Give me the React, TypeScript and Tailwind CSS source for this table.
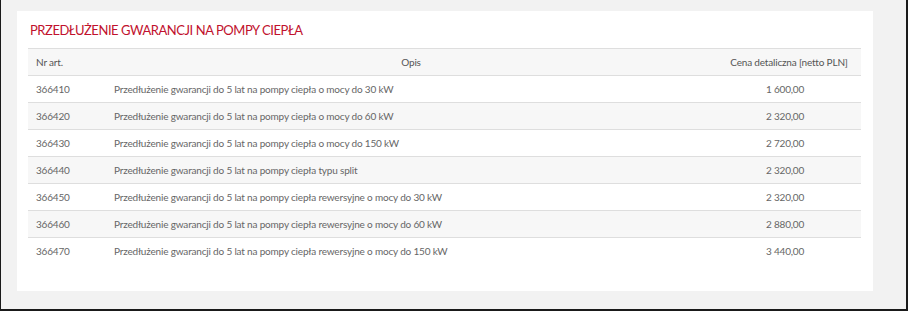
import React from 'react';

const rows = [
    { nr: '366410', opis: 'Przedłużenie gwarancji do 5 lat na pompy ciepła o mocy do 30 kW', cena: '1 600,00' },
    { nr: '366420', opis: 'Przedłużenie gwarancji do 5 lat na pompy ciepła o mocy do 60 kW', cena: '2 320,00' },
    { nr: '366430', opis: 'Przedłużenie gwarancji do 5 lat na pompy ciepła o mocy do 150 kW', cena: '2 720,00' },
    { nr: '366440', opis: 'Przedłużenie gwarancji do 5 lat na pompy ciepła typu split', cena: '2 320,00' },
    { nr: '366450', opis: 'Przedłużenie gwarancji do 5 lat na pompy ciepła rewersyjne o mocy do 30 kW', cena: '2 320,00' },
    { nr: '366460', opis: 'Przedłużenie gwarancji do 5 lat na pompy ciepła rewersyjne o mocy do 60 kW', cena: '2 880,00' },
    { nr: '366470', opis: 'Przedłużenie gwarancji do 5 lat na pompy ciepła rewersyjne o mocy do 150 kW', cena: '3 440,00' },
];

export default function App() {
    return (
        <div className="h-[311px] w-[908px] bg-[#f2f2f2] border-l border-r-2 border-b-2 border-[#1a1a1a] pl-[16px] pt-[11px] font-['Lato',sans-serif]">
            <div className="w-[856px] h-[280px] bg-white pl-[11px] pr-[12px] pt-[10px]">
                <h1 className="text-[13px] leading-[18px] text-[#c1112d] pl-[2px] uppercase tracking-[-0.45px]">
                    Przedłużenie gwarancji na pompy ciepła
                </h1>
                <table className="mt-[9px] w-[833px] border-collapse text-[10px] tracking-[-0.18px] text-[#666666]">
                    <thead>
                        <tr className="h-[27px] bg-[#f7f7f7] border-t border-b border-[#dedede] text-[#555555]">
                            <th className="w-[77px] text-left font-normal pl-[8px]">Nr art.</th>
                            <th className="font-normal text-center">Opis</th>
                            <th className="w-[144px] font-normal text-center">Cena detaliczna [netto PLN]</th>
                        </tr>
                    </thead>
                    <tbody>
                        {rows.map((r, i) => (
                            <tr
                                key={r.nr}
                                className={`h-[27px] ${i % 2 === 1 ? 'bg-[#f7f7f7]' : 'bg-white'} ${i < rows.length - 1 ? 'border-b border-[#dedede]' : ''}`}
                            >
                                <td className="pl-[8px]">{r.nr}</td>
                                <td className="pl-[9px]">{r.opis}</td>
                                <td className="text-center pr-[8px]">{r.cena}</td>
                            </tr>
                        ))}
                    </tbody>
                </table>
            </div>
        </div>
    );
}
